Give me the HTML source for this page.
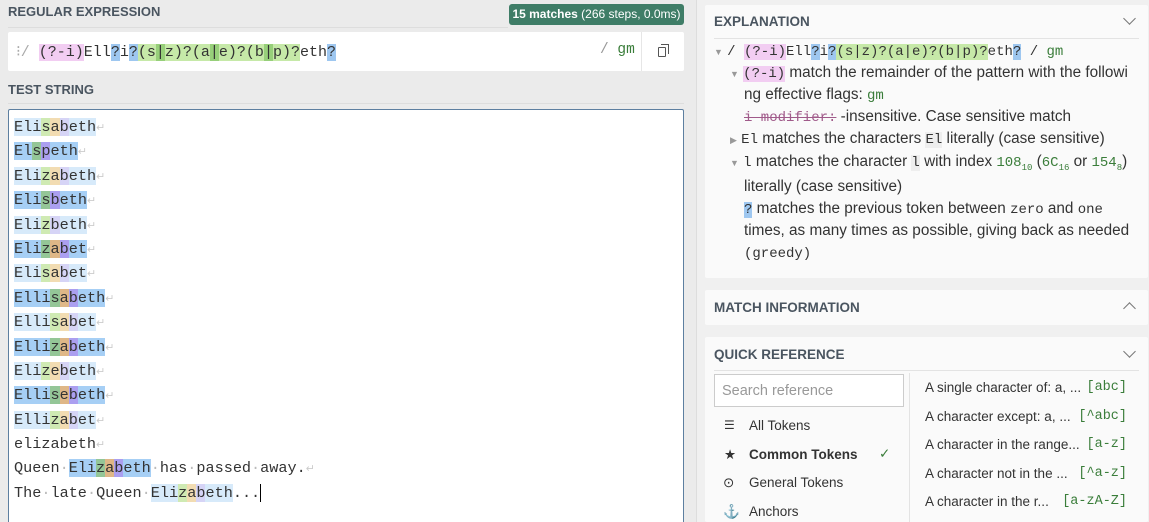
<!DOCTYPE html>
<html><head><meta charset="utf-8"><style>
*{box-sizing:border-box;margin:0;padding:0}
html,body{width:1149px;height:522px;overflow:hidden}
body{background:#ebebeb;font-family:"Liberation Sans",sans-serif;color:#333;position:relative}
.mono{font-family:"Liberation Mono",monospace}
.lbl{position:absolute;font-size:13px;font-weight:bold;color:#4a5560}
#left{position:absolute;left:0;top:0;width:697px;height:522px;background:#ebebeb;border-right:1px solid #ddd}
#right{position:absolute;left:697px;top:0;width:452px;height:522px;background:#f0f0f0}
.badge{position:absolute;left:509px;top:4px;width:175px;height:21px;background:#3f7d67;color:#fff;font-size:12px;line-height:21px;text-align:center;border-radius:3px}
.rx{position:absolute;left:8px;top:32px;width:676px;height:39px;background:#fff;border-radius:2px}
.rx .t{position:absolute;left:8px;top:10px;font-size:15px;color:#333;white-space:pre}
.pk{background:#f2cdf2}.bl{background:#9ec7f0}.gr{background:#c6e9a8}.gd{background:#97cf7a}
.ts{position:absolute;left:8px;top:109px;width:676px;height:420px;background:#fff;border:1px solid #5d7fa0;border-radius:2px;overflow:hidden}
.lines{position:absolute;left:5px;top:5px;font-size:15.2px;line-height:24.4px;white-space:nowrap;color:#333}
.lines div{height:24.4px}
.L{background:#d7eafa}.D{background:#a6cff5}
.L1{background:#cfeab3}.L2{background:#f2dcb2}.L3{background:#d6d4f6}
.D1{background:#94c697}.D2{background:#dfb787}.D3{background:#ab9ff0}
.n{color:#ccc;font-size:11px}.w{color:#bbb}
.card{position:absolute;left:705px;width:443px;background:#fafafa;border-radius:2px}
.card h3{position:absolute;left:9px;font-size:13.5px;font-weight:bold;color:#4a5560}
.chev{position:absolute;right:14px;width:9px;height:9px;border-right:1.5px solid #777;border-bottom:1.5px solid #777}
.ex{position:absolute;font-size:15.3px;color:#333;white-space:pre}
.ex .mono,.ex.mono{font-size:14px}
.g{color:#3a7d3a}
.tri{color:#999;font-size:9px}
.sv{position:absolute;top:374px;width:190px;height:33px;border:1px solid #ccc;background:#fff;font-size:14.5px;color:#999;padding:8px 7px}
.it{position:absolute;font-size:13.5px;color:#333}
.rr{position:absolute;left:925px;width:202px;font-size:13.5px;color:#333}
.rr span{position:absolute;right:0;color:#3a7d3a;font-family:"Liberation Mono",monospace}
</style></head><body>
<div id="left">
<div class="lbl" style="left:8px;top:4px">REGULAR EXPRESSION</div>
<div class="badge"><b>15 matches</b> (266 steps, 0.0ms)</div>
<div style="position:absolute;left:8px;top:27px;width:500px;height:1px;background:#ddd"></div>
<div class="rx"><div class="t mono"><span style="color:#aaa">⁝/ </span><span class="pk">(?-i)</span>Ell<span class="bl">?</span>i<span class="bl">?</span><span class="gr">(s</span><span class="gd">|</span><span class="gr">z)?(a</span><span class="gd">|</span><span class="gr">e)?(b</span><span class="gd">|</span><span class="gr">p)?</span>eth<span class="bl">?</span></div>
<div class="mono" style="position:absolute;left:592px;top:10px;font-size:14.5px"><span style="color:#999">/ </span><span class="g">gm</span></div>
<div style="position:absolute;left:633px;top:0;width:1px;height:39px;background:#e6e6e6"></div>
<div style="position:absolute;left:650px;top:15px;width:8px;height:10px;border:1.5px solid #555;border-radius:1px;background:#fff"></div>
<div style="position:absolute;left:653px;top:12px;width:8px;height:10px;border-top:1.5px solid #555;border-right:1.5px solid #555"></div>
</div>
<div class="lbl" style="left:8px;top:82px">TEST STRING</div>
<div style="position:absolute;left:8px;top:103px;width:676px;height:1px;background:#ddd"></div>
<div class="ts"><div class="lines mono"><div><span class="L">Eli<span class="L1">s</span><span class="L2">a</span><span class="L3">b</span>eth</span><span class="n">↵</span></div><div><span class="D">El<span class="D1">s</span><span class="D3">p</span>eth</span><span class="n">↵</span></div><div><span class="L">Eli<span class="L1">z</span><span class="L2">a</span><span class="L3">b</span>eth</span><span class="n">↵</span></div><div><span class="D">Eli<span class="D1">s</span><span class="D3">b</span>eth</span><span class="n">↵</span></div><div><span class="L">Eli<span class="L1">z</span><span class="L3">b</span>eth</span><span class="n">↵</span></div><div><span class="D">Eli<span class="D1">z</span><span class="D2">a</span><span class="D3">b</span>et</span><span class="n">↵</span></div><div><span class="L">Eli<span class="L1">s</span><span class="L2">a</span><span class="L3">b</span>et</span><span class="n">↵</span></div><div><span class="D">Elli<span class="D1">s</span><span class="D2">a</span><span class="D3">b</span>eth</span><span class="n">↵</span></div><div><span class="L">Elli<span class="L1">s</span><span class="L2">a</span><span class="L3">b</span>et</span><span class="n">↵</span></div><div><span class="D">Elli<span class="D1">z</span><span class="D2">a</span><span class="D3">b</span>eth</span><span class="n">↵</span></div><div><span class="L">Eli<span class="L1">z</span><span class="L2">e</span><span class="L3">b</span>eth</span><span class="n">↵</span></div><div><span class="D">Elli<span class="D1">s</span><span class="D2">e</span><span class="D3">b</span>eth</span><span class="n">↵</span></div><div><span class="L">Elli<span class="L1">z</span><span class="L2">a</span><span class="L3">b</span>et</span><span class="n">↵</span></div><div>elizabeth<span class="n">↵</span></div><div>Queen<span class="w">·</span><span class="D">Eli<span class="D1">z</span><span class="D2">a</span><span class="D3">b</span>eth</span><span class="w">·</span>has<span class="w">·</span>passed<span class="w">·</span>away.<span class="n">↵</span></div><div>The<span class="w">·</span>late<span class="w">·</span>Queen<span class="w">·</span><span class="L">Eli<span class="L1">z</span><span class="L2">a</span><span class="L3">b</span>eth</span>...<span style="border-left:1px solid #000"></span></div></div></div>
</div>
<div id="right"></div>
<div class="card" style="top:5px;height:273px">
<h3 style="top:9px">EXPLANATION</h3><div class="chev" style="top:9px;transform:rotate(45deg)"></div>
<div style="position:absolute;left:9px;right:9px;top:33px;height:1px;background:#e3e3e3"></div>
</div>
<div class="ex" style="left:714px;top:42px"><span class="tri">▼</span> <span class="mono">/ <span class="pk">(?-i)</span>Ell<span class="bl">?</span>i<span class="bl">?</span><span class="gr">(s|z)?(a|e)?(b|p)?</span>eth<span class="bl">?</span> / <span class="g">gm</span></span></div>
<div class="ex" style="left:730px;top:64px"><span class="tri">▼</span> <span class="mono pk">(?-i)</span> match the remainder of the pattern with the followi</div>
<div class="ex" style="left:744px;top:86px">ng effective flags: <span class="mono g">gm</span></div>
<div class="ex" style="left:744px;top:108px"><span class="mono" style="color:#a05a8a;text-decoration:line-through">i modifier:</span> -insensitive. Case sensitive match</div>
<div class="ex" style="left:730px;top:130px"><span class="tri">▶</span> <span class="mono">El</span> matches the characters <span class="mono" style="background:#eee">El</span> literally (case sensitive)</div>
<div class="ex" style="left:730px;top:153px"><span class="tri">▼</span> <span class="mono">l</span> matches the character <span class="mono" style="background:#eee">l</span> with index <span class="mono g">108<sub style="font-size:9px">10</sub></span> (<span class="mono g">6C<sub style="font-size:9px">16</sub></span> or <span class="mono g">154<sub style="font-size:9px">8</sub></span>)</div>
<div class="ex" style="left:744px;top:178px">literally (case sensitive)</div>
<div class="ex" style="left:744px;top:200px"><span class="mono bl">?</span> matches the previous token between <span class="mono">zero</span> and <span class="mono">one</span></div>
<div class="ex" style="left:744px;top:222px">times, as many times as possible, giving back as needed</div>
<div class="ex mono" style="left:744px;top:246px">(greedy)</div>
<div class="card" style="top:290px;height:35px">
<h3 style="top:10px">MATCH INFORMATION</h3><div class="chev" style="top:14px;transform:rotate(-135deg)"></div>
</div>
<div class="card" style="top:337px;height:185px">
<h3 style="top:10px">QUICK REFERENCE</h3><div class="chev" style="top:10px;transform:rotate(45deg)"></div>
<div style="position:absolute;left:9px;right:9px;top:33px;height:1px;background:#e3e3e3"></div>
<div style="position:absolute;left:204px;top:36px;width:1px;height:149px;background:#e3e3e3"></div>
</div>
<div class="sv" style="left:714px">Search reference</div>
<div class="it" style="left:724px;top:418px;font-size:12px">☰</div><div class="it" style="left:749px;top:418px">All Tokens</div>
<div class="it" style="left:724px;top:447px">★</div><div class="it" style="left:749px;top:447px;font-weight:bold">Common Tokens</div><div class="it" style="left:879px;top:446px;color:#3a7d3a">✓</div>
<div class="it" style="left:723px;top:475px">⊙</div><div class="it" style="left:749px;top:475px">General Tokens</div>
<div class="it" style="left:723px;top:504px">⚓</div><div class="it" style="left:749px;top:504px">Anchors</div>
<div class="rr" style="top:380px">A single character of: a, ...<span>[abc]</span></div>
<div class="rr" style="top:409px">A character except: a, ...<span>[^abc]</span></div>
<div class="rr" style="top:437px">A character in the range...<span>[a-z]</span></div>
<div class="rr" style="top:466px">A character not in the ...<span>[^a-z]</span></div>
<div class="rr" style="top:494px">A character in the r...<span>[a-zA-Z]</span></div>
</body></html>
